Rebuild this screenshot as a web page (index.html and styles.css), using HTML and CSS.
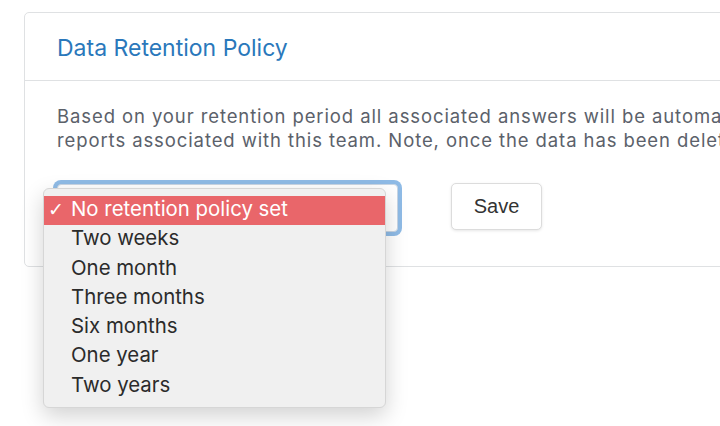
FILE: index.html
```html
<!DOCTYPE html>
<html>
<head>
<meta charset="utf-8">
<link rel="stylesheet" href="styles.css">
</head>
<body>
<div class="page">
  <div class="card">
    <div class="card-header">Data Retention Policy</div>
    <div class="card-body">
      <p class="desc">Based on your retention period all associated answers will be automatically deleted along with<br>reports associated with this team. Note, once the data has been deleted it cannot be recovered.</p>
      <div class="controls">
        <div class="select-wrap">
          <div class="select"></div>
          <ul class="menu">
            <li class="item selected"><span class="check">✓</span>No retention policy set</li>
            <li class="item">Two weeks</li>
            <li class="item">One month</li>
            <li class="item">Three months</li>
            <li class="item">Six months</li>
            <li class="item">One year</li>
            <li class="item">Two years</li>
          </ul>
        </div>
        <button class="btn">Save</button>
      </div>
    </div>
  </div>
</div>
</body>
</html>
```

FILE: styles.css
```css
html, body {
  margin: 0;
  padding: 0;
  background: #ffffff;
  overflow: hidden;
}
.page {
  width: 720px;
  height: 426px;
  overflow: hidden;
  padding: 12px 0 0 24px;
  box-sizing: border-box;
  font-family: Inter, "Liberation Sans", Arial, sans-serif;
}
.card {
  width: 900px;
  border: 1px solid #dfe1e3;
  border-radius: 5px;
  background: #fff;
}
.card-header {
  height: 68px;
  box-sizing: border-box;
  padding: 21px 32px 0;
  border-bottom: 1px solid #dfe1e3;
  color: #2a78bb;
  font-size: 23px;
}
.card-body {
  padding: 23px 32px 34px;
}
.desc {
  margin: 0;
  width: 1200px;
  color: #5b616a;
  font-size: 18.5px;
  line-height: 24px;
  letter-spacing: 0.9px;
  white-space: nowrap;
}
.controls {
  display: flex;
  align-items: center;
  gap: 53px;
  margin-top: 32px;
}
.select-wrap {
  position: relative;
}
.select {
  width: 341px;
  height: 48px;
  box-sizing: border-box;
  border: 1px solid #c9d6e4;
  border-radius: 4px;
  box-shadow: 0 0 0 4px #8fbbe6;
  background: #fff;
}
.menu {
  position: absolute;
  left: -14px;
  top: 4px;
  width: 343px;
  margin: 0;
  padding: 7px 0 6px;
  list-style: none;
  background: #f0f0f0;
  border: 1px solid #d6d6d6;
  border-radius: 6px;
  box-sizing: border-box;
  box-shadow: 0 8px 22px rgba(0,0,0,0.18);
  z-index: 2;
}
.item {
  position: relative;
  height: 29.3px;
  line-height: 25px;
  padding-left: 27px;
  font-size: 20.4px;
  color: #2b2b2b;
  white-space: nowrap;
}
.item.selected {
  background: #e9666a;
  color: #fff;
}
.check {
  position: absolute;
  left: 4px;
  top: 1px;
  font-size: 19px;
  font-family: "DejaVu Sans", sans-serif;
}
.btn {
  width: 91px;
  height: 47px;
  margin-top: -3px;
  border: 1px solid #dcdcdc;
  border-radius: 5px;
  background: #fff;
  box-shadow: 0 1px 3px rgba(0,0,0,0.1);
  font-family: "Liberation Sans", Arial, sans-serif;
  font-size: 20px;
  color: #333;
  padding: 0;
}
```
